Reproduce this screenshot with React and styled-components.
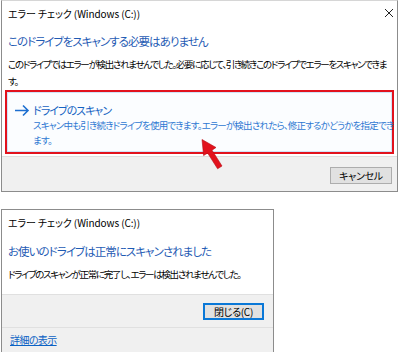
import styled, { createGlobalStyle } from 'styled-components'

const GlobalStyle = createGlobalStyle`
    html, body {
        margin: 0;
        padding: 0;
        background: #ffffff;
    }
    body {
        font-family: "Noto Sans CJK JP", "Noto Sans", sans-serif;
        font-feature-settings: "palt";
        color: #000;
    }
`

const Page = styled.div`
    position: relative;
    width: 400px;
    height: 352px;
    overflow: hidden;
    display: flex;
    flex-direction: column;
    gap: 17px;
`

const Dialog = styled.div`
    box-sizing: border-box;
    margin-left: 1px;
    width: ${({ $width }) => $width}px;
    background: #ffffff;
    border: 1px solid #8c8c8c;
    border-top-color: ${({ $open }) => ($open ? '#d6d6d6' : '#8c8c8c')};
    display: flex;
    flex-direction: column;
`

const TitleBar = styled.div`
    height: 24px;
    display: flex;
    align-items: center;
    justify-content: space-between;
    padding: 0 3px 0 6px;
    font-size: 10px;
    letter-spacing: -0.1px;
`

const CloseIcon = styled.svg`
    width: 10px;
    height: 10px;
`

const Content = styled.div`
    padding: ${({ $pad }) => $pad};
    display: flex;
    flex-direction: column;
`

const Heading = styled.div`
    margin-left: 6px;
    font-size: 11.5px;
    letter-spacing: -0.95px;
    line-height: 18px;
    color: #1f5bb4;
    white-space: nowrap;
`

const Body = styled.div`
    margin: 5.5px 6px 0 6px;
    font-size: 9.5px;
    letter-spacing: -1.3px;
    line-height: 17px;
    white-space: nowrap;
`

const CommandLink = styled.div`
    margin: 0.5px 3px 0 3px;
    border: 2px solid #e2121d;
`

const CommandInner = styled.div`
    border: 1px solid #cfe3f7;
    background: #fbfdff;
    padding: 9px 6px 3px 6px;
    display: flex;
    gap: 3px;
`

const LinkArrow = styled.svg`
    flex: none;
    width: 16px;
    height: 16px;
`

const LinkText = styled.div`
    display: flex;
    flex-direction: column;
`

const LinkTitle = styled.div`
    font-size: 11px;
    letter-spacing: -1px;
    line-height: 16px;
    color: #1663c2;
`

const LinkDesc = styled.div`
    font-size: 9.5px;
    letter-spacing: -0.8px;
    line-height: 15px;
    color: #2e78d2;
    white-space: nowrap;
`

const Footer = styled.div`
    background: #f0f0f0;
    border-top: 1px solid #e0e0e0;
    height: ${({ $height }) => $height}px;
    box-sizing: border-box;
    display: flex;
    justify-content: ${({ $align }) => $align || 'flex-end'};
    align-items: ${({ $valign }) => $valign || 'flex-start'};
    padding: ${({ $pad }) => $pad};
`

const Button = styled.div`
    box-sizing: border-box;
    width: ${({ $width }) => $width}px;
    height: 17px;
    display: flex;
    align-items: center;
    justify-content: center;
    font-size: 10px;
    letter-spacing: -0.3px;
    background: #e1e1e1;
    border: 1px solid ${({ $default }) => ($default ? '#0a78d7' : '#adadad')};
    box-shadow: ${({ $default }) => ($default ? 'inset 0 0 0 1px #0a78d7' : 'none')};
`

const DetailLink = styled.span`
    font-size: 10px;
    letter-spacing: -0.6px;
    color: #0b62c4;
    text-decoration: underline;
`

const Pointer = styled.svg`
    position: absolute;
    left: 0;
    top: 0;
    width: 400px;
    height: 352px;
    pointer-events: none;
`

export default function App() {
    return (
        <>
            <GlobalStyle />
            <Page>
                <Dialog $width={397} $open>
                    <TitleBar>
                        <span>エラー チェック (Windows (C:))</span>
                        <CloseIcon viewBox="0 0 10 10">
                            <path d="M1 1 L9 9 M9 1 L1 9" stroke="#222" strokeWidth="1" />
                        </CloseIcon>
                    </TitleBar>
                    <Content $pad="7px 0 2px 0">
                        <Heading>このドライブをスキャンする必要はありません</Heading>
                        <Body>
                            このドライブではエラーが検出されませんでした。必要に応じて、引き続きこのドライブでエラーをスキャンできま
                            <br />す。
                        </Body>
                        <CommandLink>
                            <CommandInner>
                                <LinkArrow viewBox="0 0 16 16">
                                    <path
                                        d="M1 8.5 H14 M9 3.5 L14 8.5 L9 13.5"
                                        stroke="#1d6fd0"
                                        strokeWidth="1.6"
                                        fill="none"
                                    />
                                </LinkArrow>
                                <LinkText>
                                    <LinkTitle>ドライブのスキャン</LinkTitle>
                                    <LinkDesc>
                                        スキャン中も引き続きドライブを使用できます。エラーが検出されたら、修正するかどうかを指定でき
                                        <br />ます。
                                    </LinkDesc>
                                </LinkText>
                            </CommandInner>
                        </CommandLink>
                    </Content>
                    <Footer $height={35} $pad="10px 5px 0 0">
                        <Button $width={62}>キャンセル</Button>
                    </Footer>
                </Dialog>

                <Dialog $width={273}>
                    <TitleBar>
                        <span>エラー チェック (Windows (C:))</span>
                    </TitleBar>
                    <Content $pad="8px 0 11px 0">
                        <Heading>お使いのドライブは正常にスキャンされました</Heading>
                        <Body>ドライブのスキャンが正常に完了し、エラーは検出されませんでした。</Body>
                    </Content>
                    <Footer $height={33} $pad="8px 9px 0 0">
                        <Button $width={61} $default>
                            閉じる(C)
                        </Button>
                    </Footer>
                    <Footer $height={25} $align="flex-start" $valign="center" $pad="0 0 0 8px">
                        <DetailLink>詳細の表示</DetailLink>
                    </Footer>
                </Dialog>

                <Pointer viewBox="0 0 400 352">
                    <polygon
                        points="202,139.5 216,147.5 212,150.2 222,166 217.6,168.8 207.6,153 203.6,155.6"
                        fill="#e2121d"
                        stroke="#b50d16"
                        strokeWidth="0.6"
                    />
                </Pointer>
            </Page>
        </>
    )
}
